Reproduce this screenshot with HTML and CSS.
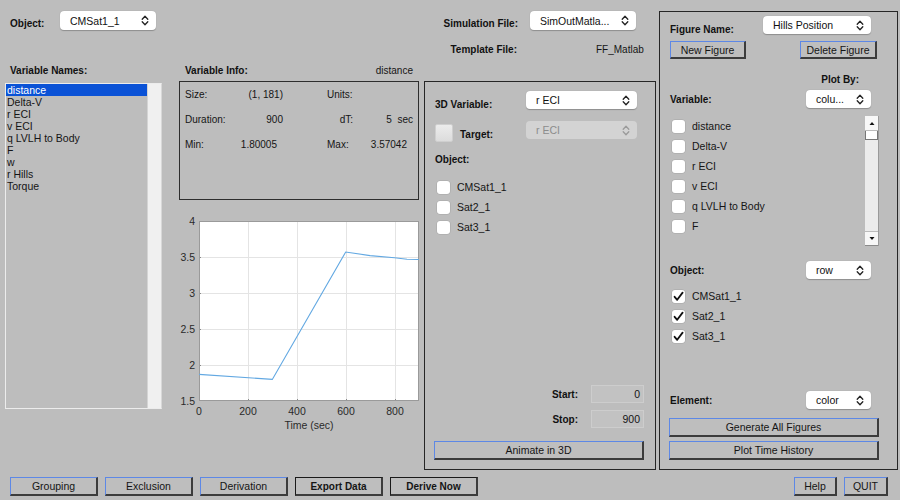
FILE: index.html
```html
<!DOCTYPE html>
<html>
<head>
<meta charset="utf-8">
<link rel="stylesheet" href="styles.css">
</head>
<body>
<div class="app">
  <div class="main">
    <div class="leftcol">
      <div class="header">
        <div class="objrow">
          <span class="lbl obj-lbl">Object:</span>
          <div class="popup pop-obj"><span>CMSat1_1</span><svg class="chev" width="8" height="13" viewBox="0 0 8 13"><path d="M1.2 5.2 L4 2.2 L6.8 5.2 M1.2 7.8 L4 10.8 L6.8 7.8"/></svg></div>
        </div>
        <div class="simblock">
          <span class="lbl lbl-right sim-lbl">Simulation File:</span>
          <div class="popup pop-sim"><span>SimOutMatla...</span><svg class="chev" width="8" height="13" viewBox="0 0 8 13"><path d="M1.2 5.2 L4 2.2 L6.8 5.2 M1.2 7.8 L4 10.8 L6.8 7.8"/></svg></div>
          <span class="lbl lbl-right tmpl-lbl">Template File:</span>
          <span class="tmpl-val">FF_Matlab</span>
        </div>
      </div>
      <div class="body">
        <div class="namescol">
          <div class="lbl names-lbl">Variable Names:</div>
          <div class="listbox">
            <div class="listitems">
              <div class="li sel">distance</div>
              <div class="li">Delta-V</div>
              <div class="li">r ECI</div>
              <div class="li">v ECI</div>
              <div class="li">q LVLH to Body</div>
              <div class="li">F</div>
              <div class="li">w</div>
              <div class="li">r Hills</div>
              <div class="li">Torque</div>
            </div>
            <div class="liststrip"></div>
          </div>
        </div>
        <div class="infocol">
          <div class="infohead"><span class="lbl">Variable Info:</span><span class="txt">distance</span></div>
          <div class="infobox">
            <div class="irow"><span class="c1">Size:</span><span class="c2">(1, 181)</span><span class="c3">Units:</span><span class="c4"></span></div>
            <div class="irow"><span class="c1">Duration:</span><span class="c2">900</span><span class="c3 r">dT:</span><span class="c4">5&nbsp;&nbsp;sec</span></div>
            <div class="irow"><span class="c1">Min:</span><span class="c2 pr">1.80005</span><span class="c3">Max:</span><span class="c4 pr">3.57042</span></div>
          </div>
          <svg class="plot" width="241" height="230" viewBox="0 0 241 230">
            <rect x="20" y="11" width="220" height="180" fill="#ffffff"/>
            <g stroke="#e4e4e4" stroke-width="1">
              <line x1="69.5" y1="11" x2="69.5" y2="191"/>
              <line x1="118.5" y1="11" x2="118.5" y2="191"/>
              <line x1="167.5" y1="11" x2="167.5" y2="191"/>
              <line x1="216.5" y1="11" x2="216.5" y2="191"/>
              <line x1="20" y1="47.5" x2="240" y2="47.5"/>
              <line x1="20" y1="83.5" x2="240" y2="83.5"/>
              <line x1="20" y1="119.5" x2="240" y2="119.5"/>
              <line x1="20" y1="155.5" x2="240" y2="155.5"/>
            </g>
            <g stroke="#8a8a8a" stroke-width="1">
              <line x1="69.5" y1="191" x2="69.5" y2="189"/>
              <line x1="118.5" y1="191" x2="118.5" y2="189"/>
              <line x1="167.5" y1="191" x2="167.5" y2="189"/>
              <line x1="216.5" y1="191" x2="216.5" y2="189"/>
              <line x1="20" y1="47.5" x2="22" y2="47.5"/>
              <line x1="20" y1="83.5" x2="22" y2="83.5"/>
              <line x1="20" y1="119.5" x2="22" y2="119.5"/>
              <line x1="20" y1="155.5" x2="22" y2="155.5"/>
            </g>
            <rect x="20.5" y="11.5" width="219" height="179" fill="none" stroke="#9a9a9a" stroke-width="1"/>
            <polyline fill="none" stroke="#62a8e2" stroke-width="1.1" points="20,164.4 93.3,169.4 166.7,42 191.1,45.6 215.6,47.7 228,49.3 240,49.5"/>
            <g class="ticks" text-anchor="end">
              <text x="16" y="15">4</text>
              <text x="16" y="51">3.5</text>
              <text x="16" y="87">3</text>
              <text x="16" y="123">2.5</text>
              <text x="16" y="159">2</text>
              <text x="16" y="195">1.5</text>
            </g>
            <g class="ticks" text-anchor="middle">
              <text x="20" y="205">0</text>
              <text x="69" y="205">200</text>
              <text x="118" y="205">400</text>
              <text x="167" y="205">600</text>
              <text x="216" y="205">800</text>
              <text x="130" y="219">Time (sec)</text>
            </g>
          </svg>
        </div>
        <div class="animpanel">
          <div class="prow">
            <span class="lbl">3D Variable:</span>
            <div class="popup pop-3d"><span>r ECI</span><svg class="chev" width="8" height="13" viewBox="0 0 8 13"><path d="M1.2 5.2 L4 2.2 L6.8 5.2 M1.2 7.8 L4 10.8 L6.8 7.8"/></svg></div>
          </div>
          <div class="prow target-row">
            <div class="tgtleft"><span class="bigbox"></span><span class="lbl tgt-lbl">Target:</span></div>
            <div class="popup pop-3d disabled"><span>r ECI</span><svg class="chev" width="8" height="13" viewBox="0 0 8 13"><path d="M1.2 5.2 L4 2.2 L6.8 5.2 M1.2 7.8 L4 10.8 L6.8 7.8"/></svg></div>
          </div>
          <div class="lbl obj3d-lbl">Object:</div>
          <div class="cbrows anim-cbs">
            <div class="cbrow"><span class="cb"></span><span>CMSat1_1</span></div>
            <div class="cbrow"><span class="cb"></span><span>Sat2_1</span></div>
            <div class="cbrow"><span class="cb"></span><span>Sat3_1</span></div>
          </div>
          <div class="erow start-row"><span class="lbl">Start:</span><span class="edit">0</span></div>
          <div class="erow stop-row"><span class="lbl">Stop:</span><span class="edit">900</span></div>
          <div class="btn anim-btn">Animate in 3D</div>
        </div>
      </div>
    </div>
    <div class="figpanel">
      <div class="frow fig-row">
        <span class="lbl fig-lbl">Figure Name:</span>
        <div class="popup pop-fig"><span>Hills Position</span><svg class="chev" width="8" height="13" viewBox="0 0 8 13"><path d="M1.2 5.2 L4 2.2 L6.8 5.2 M1.2 7.8 L4 10.8 L6.8 7.8"/></svg></div>
      </div>
      <div class="frow btn-row">
        <div class="btn newfig">New Figure</div>
        <div class="btn delfig">Delete Figure</div>
      </div>
      <div class="lbl plotby">Plot By:</div>
      <div class="frow var-row">
        <span class="lbl">Variable:</span>
        <div class="popup pop-sm"><span>colu...</span><svg class="chev" width="8" height="13" viewBox="0 0 8 13"><path d="M1.2 5.2 L4 2.2 L6.8 5.2 M1.2 7.8 L4 10.8 L6.8 7.8"/></svg></div>
      </div>
      <div class="varlist">
        <div class="cbrows fig-cbs">
          <div class="cbrow"><span class="cb"></span><span>distance</span></div>
          <div class="cbrow"><span class="cb"></span><span>Delta-V</span></div>
          <div class="cbrow"><span class="cb"></span><span>r ECI</span></div>
          <div class="cbrow"><span class="cb"></span><span>v ECI</span></div>
          <div class="cbrow"><span class="cb"></span><span>q LVLH to Body</span></div>
          <div class="cbrow"><span class="cb"></span><span>F</span></div>
        </div>
        <div class="scrollbar">
          <div class="sbtn"><svg width="12" height="13" viewBox="0 0 12 13"><path d="M3.5 8 L6 5 L8.5 8 Z" fill="#111"/></svg></div>
          <div class="sthumb"></div>
          <div class="strack"></div>
          <div class="sbtn"><svg width="12" height="13" viewBox="0 0 12 13"><path d="M3.5 5 L6 8 L8.5 5 Z" fill="#111"/></svg></div>
        </div>
      </div>
      <div class="frow obj-row">
        <span class="lbl">Object:</span>
        <div class="popup pop-sm"><span>row</span><svg class="chev" width="8" height="13" viewBox="0 0 8 13"><path d="M1.2 5.2 L4 2.2 L6.8 5.2 M1.2 7.8 L4 10.8 L6.8 7.8"/></svg></div>
      </div>
      <div class="cbrows fig-cbs obj-cbs">
        <div class="cbrow"><span class="cb"><svg width="13" height="13" viewBox="0 0 13 13"><path d="M2.6 6.8 L5.2 9.8 L10.6 2.6"/></svg></span><span>CMSat1_1</span></div>
        <div class="cbrow"><span class="cb"><svg width="13" height="13" viewBox="0 0 13 13"><path d="M2.6 6.8 L5.2 9.8 L10.6 2.6"/></svg></span><span>Sat2_1</span></div>
        <div class="cbrow"><span class="cb"><svg width="13" height="13" viewBox="0 0 13 13"><path d="M2.6 6.8 L5.2 9.8 L10.6 2.6"/></svg></span><span>Sat3_1</span></div>
      </div>
      <div class="frow el-row">
        <span class="lbl">Element:</span>
        <div class="popup pop-sm"><span>color</span><svg class="chev" width="8" height="13" viewBox="0 0 8 13"><path d="M1.2 5.2 L4 2.2 L6.8 5.2 M1.2 7.8 L4 10.8 L6.8 7.8"/></svg></div>
      </div>
      <div class="btn wide-btn gen-btn">Generate All Figures</div>
      <div class="btn wide-btn pth-btn">Plot Time History</div>
    </div>
  </div>
  <div class="bottombar">
    <div class="btn bbtn">Grouping</div>
    <div class="btn bbtn">Exclusion</div>
    <div class="btn bbtn">Derivation</div>
    <div class="btn bbtn bold">Export Data</div>
    <div class="btn bbtn bold">Derive Now</div>
    <div class="btn help-btn">Help</div>
    <div class="btn quit-btn">QUIT</div>
  </div>
</div>
</body>
</html>
```
FILE: styles.css
```css
* { box-sizing: border-box; }
html, body { margin: 0; padding: 0; }
body {
  width: 900px;
  height: 500px;
  overflow: hidden;
  background: #bdbdbd;
  font-family: "Liberation Sans", Arial, sans-serif;
  font-size: 10.5px;
  color: #151515;
}
.app { display: flex; flex-direction: column; width: 900px; height: 500px; }
.main { display: flex; height: 476px; }
.leftcol { width: 659px; display: flex; flex-direction: column; }

.lbl { font-weight: bold; font-size: 10px; color: #111; line-height: 13px; white-space: nowrap; }

/* popups */
.popup {
  display: flex;
  align-items: center;
  justify-content: space-between;
  height: 18px;
  background: #ffffff;
  border-radius: 4px;
  box-shadow: 0 0.5px 1px rgba(0,0,0,0.25);
  padding: 0 7px 0 10px;
  font-size: 10.5px;
  color: #111;
  white-space: nowrap;
}
.chev path { fill: none; stroke: #222; stroke-width: 1.3; stroke-linecap: round; stroke-linejoin: round; }
.popup.disabled { background: #d3d3d3; color: #8c8c8c; box-shadow: none; }
.popup.disabled .chev path { stroke: #9a9a9a; }

/* header */
.header { display: flex; height: 64px; padding-top: 11px; }
.objrow { display: flex; align-items: flex-start; height: 19px; margin-left: 10px; }
.obj-lbl { width: 50px; padding-top: 7px; line-height: 12px; }
.pop-obj { width: 96px; height: 19px; }
.simblock {
  margin-left: auto;
  margin-right: 23px;
  display: grid;
  grid-template-columns: 88px 106px;
  grid-template-rows: 19px 11px;
  column-gap: 12px;
  row-gap: 14px;
  align-items: center;
}
.lbl-right { justify-self: end; }
.sim-lbl { align-self: start; padding-top: 7px; line-height: 12px; height: 19px; }
.tmpl-lbl { margin-right: 1px; }
.pop-sim { width: 106px; height: 19px; }
.tmpl-val { margin-left: 66px; font-size: 10px; white-space: nowrap; line-height: 11px; }

/* body */
.body { display: flex; height: 412px; }
.namescol { width: 179px; }
.names-lbl { margin-left: 10px; }
.listbox {
  margin-left: 5px;
  margin-top: 6px;
  width: 157px;
  height: 326px;
  display: flex;
  border: 1px solid #ececec;
  border-right: 1px solid #d8d8d8;
}
.listitems { width: 141px; padding-top: 0; }
.li { height: 12px; line-height: 12px; padding-left: 1px; font-size: 10.5px; white-space: nowrap; }
.li.sel { background: #0a52d6; color: #ffffff; }
.liststrip { flex: 1; background: #f0f0f0; border-left: 1px solid #d4d4d4; }

.infocol { width: 240px; }
.infohead { display: flex; justify-content: space-between; height: 17px; padding: 0 6px; line-height: 13px; }
.infohead .txt { font-size: 10px; }
.infobox {
  height: 119px;
  border: 1px solid #2e2e2e;
  padding: 6px 0 0 5px;
}
.irow { display: flex; height: 25px; line-height: 13px; font-size: 10px; }
.c1 { width: 48px; }
.c2 { width: 50px; text-align: right; }
.c3 { width: 26px; margin-left: 44px; }
.c4 { width: 60px; text-align: right; }
.c3.r { text-align: right; }
.pr { padding-right: 6px; }
.plot { display: block; margin-top: 10px; }
.ticks text { font-family: "Liberation Sans", Arial, sans-serif; font-size: 10.5px; fill: #2a2a2a; }

/* anim panel */
.animpanel {
  margin-left: 5px;
  margin-top: 17px;
  width: 232px;
  height: 389px;
  border: 1px solid #262626;
  display: flex;
  flex-direction: column;
  padding: 9px 0 9px 0;
}
.prow { display: flex; align-items: center; justify-content: space-between; height: 18px; padding: 0 18px 0 10px; }
.prow .lbl { margin-top: 8px; }
.pop-3d { width: 111px; }
.target-row { margin-top: 12px; align-items: flex-start; }
.tgtleft { display: flex; align-items: flex-start; }
.bigbox {
  width: 18px; height: 18px; margin-top: 3px;
  background: linear-gradient(#ececec, #dcdcdc);
  border-radius: 2px;
  border: 1px solid #cfcfcf;
}
.prow .tgt-lbl { margin-left: 7px; margin-top: 7px; }
.obj3d-lbl { margin-left: 10px; margin-top: 14px; }
.cbrows { display: flex; flex-direction: column; }
.anim-cbs { margin-top: 11px; padding-left: 12px; }
.cbrow { display: flex; align-items: center; height: 20px; font-size: 10.5px; white-space: nowrap; }
.cb {
  width: 13px; height: 13px;
  background: #ffffff;
  border-radius: 3px;
  box-shadow: 0 0 0 0.5px rgba(0,0,0,0.12);
  margin-right: 7px;
  display: flex;
}
.cb path { fill: none; stroke: #111; stroke-width: 1.8; stroke-linecap: round; stroke-linejoin: round; }
.erow { display: flex; align-items: center; justify-content: flex-end; height: 18px; padding-right: 11px; }
.start-row { margin-top: auto; }
.stop-row { margin-top: 7px; }
.erow .lbl { margin-right: 13px; }
.edit {
  width: 53px; height: 18px;
  background: #c2c2c2;
  border: 1px solid #cdcdcd;
  text-align: right;
  padding-right: 3px;
  line-height: 16px;
  font-size: 10.5px;
}

/* buttons */
.btn {
  display: flex; align-items: center; justify-content: center;
  height: 19px;
  background: #bebebe;
  border-top: 1px solid #5d88e6;
  border-left: 1px solid #5d88e6;
  border-right: 2px solid #3c3c3c;
  border-bottom: 2px solid #3c3c3c;
  font-size: 10.5px;
  color: #151515;
  white-space: nowrap;
}
.btn.bold { font-weight: bold; border-top-color: #1a1a1a; border-left-color: #1a1a1a; font-size: 10px; }
.anim-btn { margin: 13px 11px 0 9px; }

/* figure panel */
.figpanel {
  margin-top: 11px;
  width: 239px;
  height: 459px;
  border: 1px solid #262626;
  display: flex;
  flex-direction: column;
  padding: 4px 0 9px 0;
}
.frow { display: flex; align-items: center; justify-content: space-between; padding: 0 26px 0 10px; height: 18px; }
.fig-row .fig-lbl { margin-top: 8px; }
.pop-fig { width: 108px; }
.btn-row { margin-top: 7px; padding: 0 20px 0 10px; }
.newfig { width: 76px; height: 18px; }
.delfig { width: 77px; height: 18px; }
.plotby { align-self: flex-end; margin-right: 38px; margin-top: 14px; }
.var-row { margin-top: 4px; }
.var-row .lbl, .obj-row .lbl, .el-row .lbl { margin-top: 0; }
.pop-sm { width: 65px; }
.varlist { display: flex; margin-top: 8px; height: 130px; padding-right: 18px; }
.fig-cbs { padding-left: 12px; flex: 1; }
.scrollbar {
  width: 14px; height: 130px;
  display: flex; flex-direction: column;
  background: #ececec;
  border-right: 1px solid #9a9a9a;
}
.sbtn { height: 15px; background: #f7f7f7; display: flex; align-items: center; justify-content: center; border-bottom: 1px solid #bbb; }
.sbtn:last-child { border-top: 1px solid #bbb; border-bottom: 1px solid #8a8a8a; }
.sthumb { height: 9px; background: #ffffff; border: 1px solid #777; border-top: none; }
.strack { flex: 1; }
.obj-row { margin-top: 15px; }
.obj-cbs { margin-top: 7px; flex: none; }
.el-row { margin-top: auto; }
.wide-btn { margin: 0 18px 0 9px; }
.gen-btn { margin-top: 9px; }
.pth-btn { margin-top: 4px; }

/* bottom */
.bottombar { display: flex; padding-top: 1px; padding-left: 10px; height: 24px; }
.bbtn { width: 88px; margin-right: 7px; }
.help-btn { width: 43px; margin-left: auto; margin-right: 7px; }
.quit-btn { width: 44px; margin-right: 12px; }
```
